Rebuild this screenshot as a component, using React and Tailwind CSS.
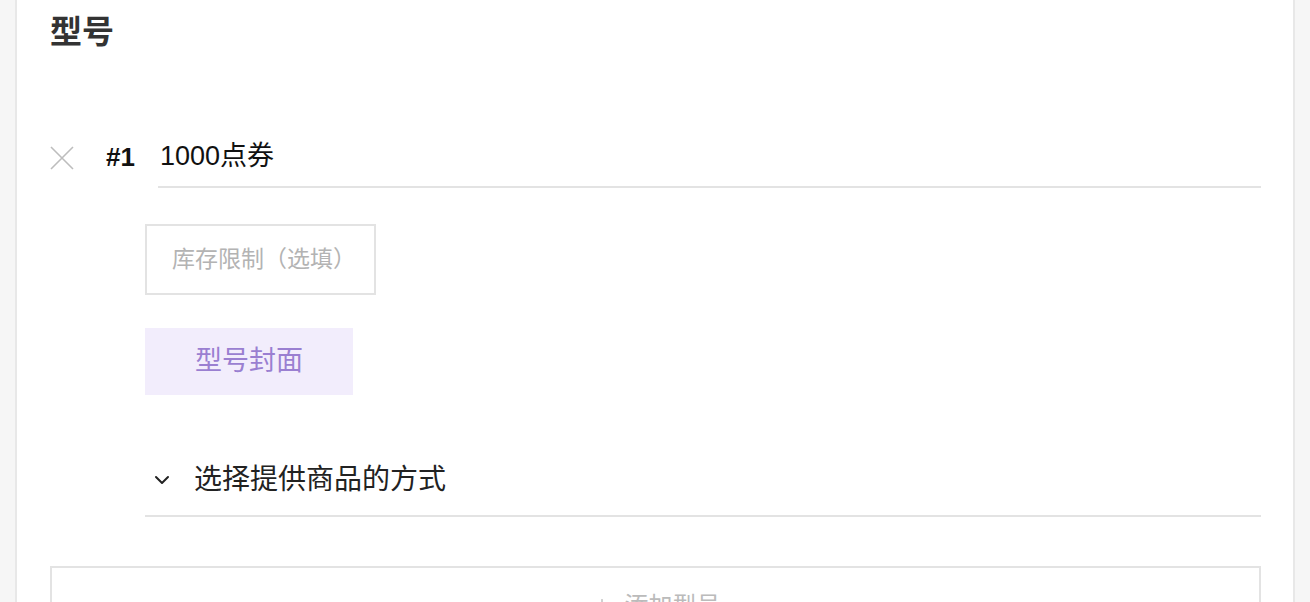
import { ChevronDown, Plus } from 'lucide-react';

// Variant editor panel: one variant row plus "add variant" action
function VariantRow({ index, name }) {
  return (
    <div>
      <div className="flex items-center">
        <button className="w-[24px] h-[24px] flex items-center justify-center text-[#bdbdbd]">
          <svg viewBox="0 0 24 24" className="w-[24px] h-[24px]" fill="none" stroke="currentColor" strokeWidth="1.6">
            <path d="M1 1L23 23M23 1L1 23" />
          </svg>
        </button>
        <span className="ml-[32px] w-[52px] text-[26px] font-bold text-[#111]">#{index}</span>
        <div className="flex-1 h-[61px] flex items-center border-b-2 border-[#e3e3e3]">
          <span className="pl-[2px] text-[27px] text-[#111]">{name}</span>
        </div>
      </div>

      <div className="pl-[95px]">
        <div className="mt-[36px] w-[231px] h-[71px] border-2 border-[#e3e3e3] flex items-center pl-[25px]">
          <span className="text-[23px] text-[#b3b3b3]">库存限制（选填）</span>
        </div>

        <button className="mt-[33px] w-[208px] h-[67px] bg-[#f2edfc] flex items-center justify-center">
          <span className="text-[27px] text-[#9a7fd1]">型号封面</span>
        </button>

        <div className="mt-[50px] h-[72px] flex items-center border-b-2 border-[#e3e3e3]">
          <ChevronDown className="ml-[5px] w-[24px] h-[24px] text-[#222]" strokeWidth={2} />
          <span className="ml-[20px] text-[28px] text-[#222]">选择提供商品的方式</span>
        </div>
      </div>
    </div>
  );
}

export default function App() {
  return (
    <div
      className="w-[1310px] h-[602px] overflow-hidden bg-[#f6f6f6] flex"
      style={{ fontFamily: '"Liberation Sans", "Noto Sans CJK SC", sans-serif' }}
    >
      <div className="ml-[15px] w-[1280px] bg-white border-x-2 border-[#e8e8e8] pl-[33px] pr-[32px]">
        <h2 className="pt-[11px] text-[32px] font-bold text-[#333] leading-[43px]">型号</h2>

        <div className="mt-[73px]">
          <VariantRow index={1} name="1000点券" />
        </div>

        <div className="mt-[49px] h-[80px] border-2 border-[#e3e3e3] flex items-center justify-center">
          <Plus className="w-[22px] h-[22px] text-[#bbb]" strokeWidth={1.5} />
          <span className="ml-[12px] text-[24px] text-[#bbb]">添加型号</span>
        </div>
      </div>
    </div>
  );
}
